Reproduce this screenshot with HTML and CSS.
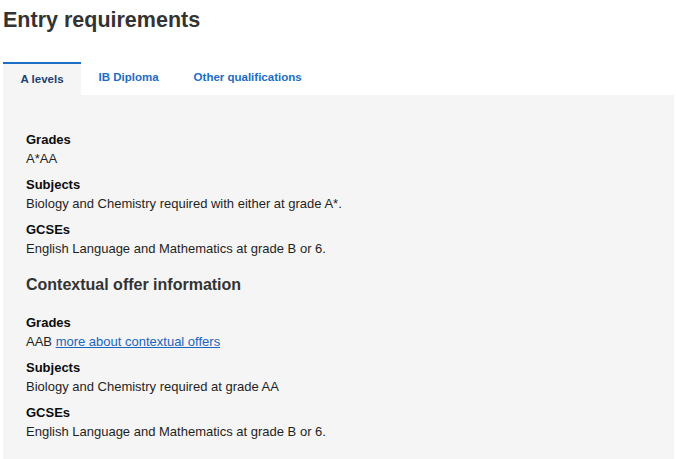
FILE: index.html
```html
<!DOCTYPE html>
<html lang="en">
<head>
<meta charset="utf-8">
<title>Entry requirements</title>
<link rel="stylesheet" href="styles.css">
</head>
<body>
<div class="page">
  <h1 class="title">Entry requirements</h1>
  <div class="tabs">
    <div class="tab tab-active">A levels</div>
    <div class="tab">IB Diploma</div>
    <div class="tab">Other qualifications</div>
  </div>
  <div class="panel">
    <dl class="reqs">
      <dt>Grades</dt>
      <dd>A*AA</dd>
      <dt>Subjects</dt>
      <dd>Biology and Chemistry required with either at grade A*.</dd>
      <dt>GCSEs</dt>
      <dd>English Language and Mathematics at grade B or 6.</dd>
    </dl>
    <h2 class="subhead">Contextual offer information</h2>
    <dl class="reqs">
      <dt>Grades</dt>
      <dd>AAB <a href="#" class="link">more about contextual offers</a></dd>
      <dt>Subjects</dt>
      <dd>Biology and Chemistry required at grade AA</dd>
      <dt>GCSEs</dt>
      <dd>English Language and Mathematics at grade B or 6.</dd>
    </dl>
  </div>
</div>
</body>
</html>
```
FILE: styles.css
```css
html, body {
  margin: 0;
  padding: 0;
  background: #ffffff;
}
body {
  font-family: "Liberation Sans", Arial, sans-serif;
  color: #1f1f1f;
}
.page {
  padding: 0 2px 0 3px;
}
.title {
  margin: 7px 0 29px 0;
  font-size: 21.5px;
  line-height: 26px;
  font-weight: bold;
  color: #333333;
}
.tabs {
  display: flex;
}
.tab {
  font-size: 11.5px;
  line-height: 15px;
  font-weight: bold;
  color: #1b6dc4;
  padding: 8px 17.5px 10px 17.5px;
}
.tab-active {
  background: #f5f5f5;
  border-top: 2px solid #1d6fc6;
  padding: 8px 17.5px 8px 17.5px;
  color: #1d3f73;
}
.panel {
  background: #f5f5f5;
  padding: 35px 23px 20px 23px;
  min-height: 330px;
}
.reqs {
  margin: 0;
}
.reqs dt {
  font-size: 13px;
  line-height: 19px;
  font-weight: bold;
  color: #0b0c0c;
}
.reqs dd {
  margin: 0 0 7px 0;
  font-size: 13px;
  line-height: 19px;
  color: #1f1f1f;
}
.subhead {
  margin: 17px 0 18px 0;
  font-size: 16px;
  line-height: 20px;
  font-weight: bold;
  color: #333333;
}
.link {
  color: #1a65c0;
  text-decoration: underline;
}
```
